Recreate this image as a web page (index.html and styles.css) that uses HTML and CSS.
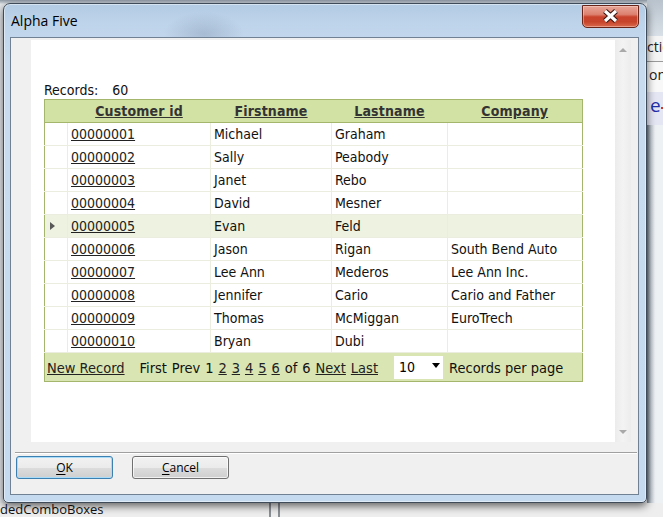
FILE: index.html
```html
<!DOCTYPE html>
<html>
<head>
<meta charset="utf-8">
<title>Alpha Five</title>
<link rel="stylesheet" href="styles.css">
</head>
<body>
<div class="desktop">
  <div class="bg-right">
    <div class="br-top"></div>
    <div class="br-row br-tion"><span>ction</span></div>
    <div class="br-row br-n"><span>on</span></div>
    <div class="br-row br-e"><span>e</span><i></i></div>
    <div class="br-rest"></div>
  </div>
  <div class="bg-bottom">
    <span class="bb-text">dedComboBoxes</span>
    <span class="bb-line l1"></span>
    <span class="bb-line l2"></span>
  </div>

  <div class="window">
    <div class="titlebar">
      <span class="title">Alpha Five</span>
      <div class="close">
        <svg width="57" height="23" viewBox="0 0 57 23">
          <path d="M23 6 L34 16 M34 6 L23 16" stroke="#3a1713" stroke-width="5.5" fill="none"/>
          <path d="M23 6 L34 16 M34 6 L23 16" stroke="#ffffff" stroke-width="3.2" fill="none"/>
        </svg>
      </div>
    </div>
    <div class="client">
      <div class="pane">
        <div class="gutter"></div>
        <div class="content">
          <div class="records">Records: <span class="count">60</span></div>
          <table class="grid">
            <colgroup>
              <col class="c-ind"><col class="c-id"><col class="c-first"><col class="c-last"><col class="c-comp">
            </colgroup>
            <thead>
              <tr><th></th><th>Customer id</th><th>Firstname</th><th>Lastname</th><th>Company</th></tr>
            </thead>
            <tbody>
              <tr><td class="ind"></td><td><a>00000001</a></td><td>Michael</td><td>Graham</td><td></td></tr>
              <tr><td class="ind"></td><td><a>00000002</a></td><td>Sally</td><td>Peabody</td><td></td></tr>
              <tr><td class="ind"></td><td><a>00000003</a></td><td>Janet</td><td>Rebo</td><td></td></tr>
              <tr><td class="ind"></td><td><a>00000004</a></td><td>David</td><td>Mesner</td><td></td></tr>
              <tr class="sel"><td class="ind"><span class="arrow"></span></td><td><a>00000005</a></td><td>Evan</td><td>Feld</td><td></td></tr>
              <tr><td class="ind"></td><td><a>00000006</a></td><td>Jason</td><td>Rigan</td><td>South Bend Auto</td></tr>
              <tr><td class="ind"></td><td><a>00000007</a></td><td>Lee Ann</td><td>Mederos</td><td>Lee Ann Inc.</td></tr>
              <tr><td class="ind"></td><td><a>00000008</a></td><td>Jennifer</td><td>Cario</td><td>Cario and Father</td></tr>
              <tr><td class="ind"></td><td><a>00000009</a></td><td>Thomas</td><td>McMiggan</td><td>EuroTrech</td></tr>
              <tr><td class="ind"></td><td><a>00000010</a></td><td>Bryan</td><td>Dubi</td><td></td></tr>
            </tbody>
            <tfoot>
              <tr>
                <td colspan="5" class="pager">
                  <div class="pager-in">
                    <a>New Record</a>
                    <span class="nav">First Prev 1 <a>2</a> <a>3</a> <a>4</a> <a>5</a> <a>6</a> of 6 <a>Next</a> <a>Last</a></span>
                    <span class="selbox"><span>10</span><span class="tri"></span></span>
                    <span class="perpage">Records per page</span>
                  </div>
                </td>
              </tr>
            </tfoot>
          </table>
        </div>
        <div class="scrollbar">
          <span class="sb-up"></span>
          <span class="sb-down"></span>
        </div>
      </div>
      <div class="sep"></div>
      <div class="buttons">
        <button class="btn default"><u>O</u>K</button>
        <button class="btn"><u>C</u>ancel</button>
      </div>
    </div>
  </div>
</div>
</body>
</html>
```
FILE: styles.css
```css
html, body {
  margin: 0;
  padding: 0;
  background: #e8eaed;
}

.desktop {
  position: relative;
  width: 663px;
  height: 517px;
  overflow: hidden;
  background: linear-gradient(180deg, #8e98a4 0, #c7ced6 3px, #e6e9ec 4px);
  font-family: "Open Sans", "Liberation Sans", sans-serif;
}

/* background application, right edge */
.bg-right {
  position: absolute;
  left: 647px;
  top: 0;
  width: 16px;
  height: 517px;
  overflow: hidden;
  display: flex;
  flex-direction: column;
  background: #eef1f4;
}
.br-top {
  height: 36px;
  background: linear-gradient(180deg, #b9c3cd, #d9e0e7);
}
.br-row {
  position: relative;
  font: 14px/20px "Open Sans", sans-serif;
  color: #222;
  white-space: nowrap;
  text-align: right;
  overflow: hidden;
}
.br-row span {
  display: block;
  margin-right: -3px;
}
.br-tion {
  height: 24px;
  padding-top: 1px;
  background: #f4f4f4;
  border-bottom: 1px solid #9a9a9a;
}
.br-n {
  height: 27px;
  padding-top: 3px;
  background: #f8f8f8;
}
.br-e {
  height: 30px;
  padding-top: 3px;
  background: #e4e6f4;
  color: #1f2fa8;
  font-size: 19px;
  text-align: left;
}
.br-e span {
  margin-left: 3px;
}
.br-e i {
  position: absolute;
  left: 14px;
  top: 15px;
  width: 3px;
  height: 2px;
  background: #c8372b;
}
.br-rest {
  flex: 1;
  background: linear-gradient(90deg, #6f7a86 0, #c4ccd4 4px, #eef1f4 8px);
}

/* background application, bottom edge */
.bg-bottom {
  position: absolute;
  left: 0;
  top: 503px;
  width: 663px;
  height: 14px;
  background: #eeeeee;
}
.bb-text {
  position: absolute;
  left: 0;
  top: -3px;
  font: 13px/18px "Open Sans", sans-serif;
  color: #111;
}
.bb-line {
  position: absolute;
  top: 0;
  width: 2px;
  height: 14px;
  background: #8a8f96;
}
.bb-line.l1 { left: 269px; }
.bb-line.l2 { left: 278px; }

/* dialog window */
.window {
  position: absolute;
  left: 3px;
  top: 3px;
  width: 644px;
  height: 500px;
  box-sizing: border-box;
  border: 1px solid #3f4b58;
  border-radius: 7px 7px 5px 5px;
  padding: 0 7px 7px 6px;
  display: flex;
  flex-direction: column;
  background:
    radial-gradient(ellipse 40px 22px at 200px 30px, rgba(120,140,165,.35), rgba(120,140,165,0)),
    linear-gradient(180deg, #b3cbe4 0, #bed4ea 20px, #c9dcef 60px, #c5daef 100%);
  box-shadow: 0 3px 9px rgba(0,0,0,.6), inset 0 0 0 1px rgba(255,255,255,.45);
}

.titlebar {
  flex: none;
  height: 33px;
  display: flex;
  align-items: flex-start;
}
.title {
  margin: 7px 0 0 1px;
  font: 14px/19px "Open Sans", sans-serif;
  color: #000;
}
.close {
  margin-left: auto;
  margin-top: 1px;
  width: 57px;
  height: 23px;
  box-sizing: border-box;
  border: 1px solid #6a2418;
  border-radius: 0 0 5px 5px;
  background: linear-gradient(180deg, #e7a698 0, #dd8170 40%, #c9432c 52%, #c7442b 75%, #d9694c 100%);
  box-shadow: inset 0 0 0 1px rgba(255,220,210,.45);
  overflow: hidden;
}
.close svg {
  display: block;
  margin: -1px 0 0 -1px;
}

.client {
  flex: 1;
  display: flex;
  flex-direction: column;
  background: #f0f0f0;
  border: 1px solid #6f8193;
}

.pane {
  margin-top: 2px;
  height: 402px;
  display: flex;
}
.gutter {
  width: 20px;
  flex: none;
}
.content {
  width: 584px;
  flex: none;
  box-sizing: border-box;
  background: #ffffff;
  padding: 42px 0 0 13px;
}
.scrollbar {
  position: relative;
  width: 16px;
  flex: none;
  background: linear-gradient(90deg, #ececec, #f3f3f3 50%, #ececec);
}
.sb-up, .sb-down {
  position: absolute;
  left: 4px;
  width: 0;
  height: 0;
  border-left: 4px solid transparent;
  border-right: 4px solid transparent;
}
.sb-up {
  top: 8px;
  border-bottom: 4px solid #a9a9a9;
}
.sb-down {
  bottom: 8px;
  border-top: 4px solid #a9a9a9;
}

.records {
  font: 14px/17px "DejaVu Sans Condensed", "DejaVu Sans", sans-serif;
  color: #111;
}
.count {
  margin-left: 10px;
}

/* grid */
.grid {
  border-collapse: collapse;
  table-layout: fixed;
  width: 538px;
  border: 1px solid #a3b66b;
  font: 14px "DejaVu Sans Condensed", "DejaVu Sans", sans-serif;
  color: #111;
}
.c-ind { width: 23px; }
.c-id { width: 143px; }
.c-first { width: 121px; }
.c-last { width: 116px; }
.c-comp { width: 135px; }

.grid th {
  height: 22px;
  line-height: 22px;
  padding: 0;
  background: #d2e1a4;
  border-bottom: 1px solid #a3b66b;
  color: #333;
  font-weight: bold;
  text-decoration: underline;
  text-align: center;
  letter-spacing: 0.15px;
}
.grid td {
  height: 22px;
  line-height: 22px;
  padding: 0 3px;
  border-right: 1px solid #ebeede;
  border-bottom: 1px solid #ebeede;
  white-space: nowrap;
  overflow: hidden;
}
.grid td:last-child {
  border-right: none;
}
.grid td a {
  color: #222;
  text-decoration: underline;
}
.grid tr.sel td {
  background: #eef3e1;
}
.grid td.ind {
  padding: 0 0 0 5px;
}
.arrow {
  display: inline-block;
  vertical-align: middle;
  width: 0;
  height: 0;
  border-top: 4px solid transparent;
  border-bottom: 4px solid transparent;
  border-left: 5px solid #585858;
  margin-top: -2px;
}

.grid td.pager {
  height: 28px;
  padding: 0 0 0 2px;
  background: #d9e5b3;
  border-top: 1px solid #a3b66b;
  border-bottom: none;
  font-size: 14.5px;
}
.pager-in {
  display: flex;
  align-items: center;
  height: 28px;
  line-height: 17px;
}
.pager-in > a, .pager-in > span:not(.selbox) {
  padding-top: 2px;
}
.pager a {
  color: #222;
  text-decoration: underline;
}
.nav {
  margin-left: 15px;
  word-spacing: 0.8px;
}
.selbox {
  margin-left: 16px;
  width: 49px;
  height: 23px;
  box-sizing: border-box;
  background: #ffffff;
  display: flex;
  align-items: center;
  justify-content: space-between;
  padding: 0 3px 0 5px;
  color: #000;
  font-size: 14px;
}
.tri {
  width: 0;
  height: 0;
  border-left: 4px solid transparent;
  border-right: 4px solid transparent;
  border-top: 5px solid #000;
  margin-top: -3px;
}
.perpage {
  margin-left: 6px;
}

/* bottom buttons */
.sep {
  margin: 10px 1px 0 4px;
  border-top: 1px solid #a0a0a0;
  border-bottom: 1px solid #ffffff;
}
.buttons {
  display: flex;
  gap: 19px;
  margin: 2px 0 0 5px;
}
.btn {
  width: 97px;
  height: 23px;
  box-sizing: border-box;
  margin: 0;
  padding: 0;
  border: 1px solid #707070;
  border-radius: 3px;
  background: linear-gradient(180deg, #f2f2f2 0, #ebebeb 50%, #dddddd 50%, #cfcfcf 100%);
  box-shadow: inset 0 0 0 1px rgba(255,255,255,.7);
  font: 12px/19px "Open Sans", sans-serif;
  color: #000;
}
.btn.default {
  border-color: #3c7fb1;
  box-shadow: inset 0 0 0 1px #a8dcf8;
}
.btn u {
  text-decoration: underline;
  text-underline-offset: 2px;
}
```
